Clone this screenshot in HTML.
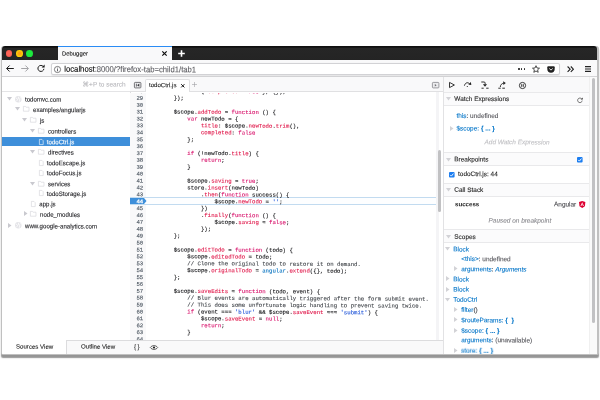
<!DOCTYPE html>
<html>
<head>
<meta charset="utf-8">
<title>Debugger</title>
<style>
html,body{margin:0;padding:0;background:#fff;}
body{width:600px;height:400px;position:relative;overflow:hidden;font-family:"Liberation Sans",sans-serif;color:#222;text-rendering:geometricPrecision;-webkit-font-smoothing:antialiased;}
*{box-sizing:border-box;}
#sc{position:absolute;left:0;top:0;width:600px;height:400px;}
#zm{position:absolute;left:0;top:0;width:600px;height:400px;}
.abs{position:absolute;}
svg{position:absolute;overflow:visible;}
#shadow{position:absolute;left:.6px;top:46px;width:598.8px;height:309.3px;border-radius:3px 3px 2px 2px;background:#c0c0c0;box-shadow:0 2.1px 1.2px rgba(0,0,0,.42);}
#win{position:absolute;left:2px;top:46px;width:595px;height:308px;background:#fff;border-radius:3px 3px 1px 1px;overflow:hidden;will-change:transform;}
#tabbar{position:absolute;left:0;top:0;width:595px;height:14px;background:linear-gradient(#0c0c0c 0,#161616 1.5px,#262626 2.5px,#242424 100%);}
#tab{position:absolute;left:55.6px;top:0;width:114.2px;height:14px;background:#f9f9fa;border-top:1px solid #2a8cf5;}
#nav{position:absolute;left:0;top:14px;width:595px;height:17px;background:#f9f9fa;border-bottom:1px solid #d4d4d6;}
#url{position:absolute;left:49px;top:3px;width:509px;height:11px;background:#fff;border:1px solid #cfcfd2;border-radius:2px;}
.t{position:absolute;left:0;top:0;white-space:nowrap;line-height:1;transform-origin:0 0;}
.dot{position:absolute;width:6.7px;height:6.7px;border-radius:50%;top:4.1px;}
.tree{font-size:6.1px;color:#38383d;}
.ln{position:absolute;left:0;top:0;transform-origin:0 0;font-family:"Liberation Mono",monospace;font-size:45.36px;line-height:55.12px;height:55.12px;color:#4c5661;white-space:pre;-webkit-text-stroke:.96px;}
.cl{position:absolute;left:0;top:0;transform-origin:0 0;font-family:"Liberation Mono",monospace;font-size:45.36px;line-height:55.12px;height:55.12px;color:#18181b;white-space:pre;-webkit-text-stroke:.96px;}
.k{color:#d8146c;} .p{color:#e01a4c;} .s{color:#1f55d9;} .c{color:#45494e;} .v{color:#0a74c0;}
.rp{font-size:6.45px;color:#38383d;}
.b{color:#0074c8;}
.hdr{position:absolute;left:0;width:147px;background:#fbfbfc;border-top:1px solid #e9e9eb;border-bottom:1px solid #e9e9eb;}
</style>
</head>
<body>
<div id="sc"><div id="zm">
<div id="shadow"></div>
<div id="win">
<div id="tabbar">
<div class="dot" style="left:3.6px;background:radial-gradient(circle,#ff6458 40%,#f0524a 100%);"></div>
<div class="dot" style="left:13.9px;background:radial-gradient(circle,#ffa412 25%,#ffdc05 75%);"></div>
<div class="dot" style="left:24.2px;background:radial-gradient(circle,#1dea3e 50%,#18d838 100%);"></div>
<div id="tab"></div>
</div>
<div class="t " style="transform:matrix(0.125,.0006,0,0.125,60,4.58);font-size:47.2px;color:#111;-webkit-text-stroke:0.8px;">Debugger</div>
<svg style="left:159.5px;top:5px" width="5" height="5" viewBox="0 0 5 5"><path d="M0.3 0.3L4.7 4.7M4.7 0.3L0.3 4.7" stroke="#111" stroke-width="1.2" fill="none"/></svg>
<svg style="left:175.5px;top:3.5px" width="7" height="7" viewBox="0 0 7 7"><path d="M3.5 0.2V6.8M0.2 3.5H6.8" stroke="#fff" stroke-width="1.6" fill="none"/></svg>
<div id="nav"></div>
<svg style="left:4px;top:18.9px" width="8" height="7" viewBox="0 0 8 7"><path d="M7.8 3.5H0.8M3.6 0.5L0.6 3.5L3.6 6.5" stroke="#1a1a1a" stroke-width="1" fill="none"/></svg>
<svg style="left:19px;top:18.9px" width="8" height="7" viewBox="0 0 8 7"><path d="M0.2 3.5H7.2M4.4 0.5L7.4 3.5L4.4 6.5" stroke="#a4a4a7" stroke-width="1" fill="none"/></svg>
<svg style="left:34.8px;top:18.4px" width="8" height="8" viewBox="0 0 8 8"><path d="M6.3 2.6A3 3 0 1 0 6.9 4.8" stroke="#1a1a1a" stroke-width="1" fill="none"/><path d="M7.6 0.4V3.4H4.6Z" fill="#1a1a1a"/></svg>
<div class="abs" style="left:48.6px;top:16.6px;width:509.4px;height:12.8px;background:#fff;border:1px solid #d2d2d5;border-radius:2px;box-shadow:0 .5px 1px rgba(0,0,0,.08);"></div>
<svg style="left:52px;top:19.5px" width="7" height="7" viewBox="0 0 7 7"><circle cx="3.5" cy="3.5" r="3.1" stroke="#3a3a3e" stroke-width=".65" fill="none"/><path d="M3.5 3.1V5.3M3.5 1.7V2.5" stroke="#3a3a3e" stroke-width=".8"/></svg>
<div class="t " style="transform:matrix(0.11438,.0006,0,0.125,62.3,18.71);font-size:67.2px;color:#000;-webkit-text-stroke:0.8px;">localhost<span style="color:#5c5c61">:8000/?firefox-tab=child1/tab1</span></div>
<div class="abs" style="left:516.3px;top:22.3px;width:1.5px;height:1.5px;border-radius:50%;background:#222"></div>
<div class="abs" style="left:518.9px;top:22.3px;width:1.5px;height:1.5px;border-radius:50%;background:#222"></div>
<div class="abs" style="left:521.5px;top:22.3px;width:1.5px;height:1.5px;border-radius:50%;background:#222"></div>
<svg style="left:530px;top:19px" width="8" height="8" viewBox="0 0 8 8"><path d="M4 0.7L5 3L7.5 3.2L5.6 4.8L6.2 7.3L4 6L1.8 7.3L2.4 4.8L0.5 3.2L3 3Z" stroke="#222" stroke-width=".8" fill="none" stroke-linejoin="round"/></svg>
<svg style="left:544.5px;top:19.6px" width="8" height="7" viewBox="0 0 8 7"><path d="M1.2 0.3H6.8Q7.7 0.3 7.7 1.2V3A3.7 3.7 0 0 1 0.3 3V1.2Q0.3 0.3 1.2 0.3Z" fill="#222"/><path d="M2.3 2.5L4 4.1L5.7 2.5" stroke="#fff" stroke-width=".9" fill="none"/></svg>
<svg style="left:564.5px;top:19.8px" width="7" height="6.4" viewBox="0 0 7 6.4"><path d="M0.6 0.5L3.2 3.2L0.6 5.9M3.8 0.5L6.4 3.2L3.8 5.9" stroke="#222" stroke-width="1.1" fill="none"/></svg>
<svg style="left:582.5px;top:20px" width="6" height="6" viewBox="0 0 6 6"><path d="M0 0.6H6M0 3H6M0 5.4H6" stroke="#222" stroke-width="1.1" fill="none"/></svg>
<div class="abs" style="left:0;top:31px;width:128.5px;height:277px;background:#fff;border-right:1px solid #dcdcde;"></div>
<div class="abs" style="left:0;top:31px;width:128px;height:15px;border-bottom:1px solid #e4e4e6;"></div>
<div class="t " style="transform:matrix(0.125,.0006,0,0.125,80.6,35.05);font-size:52.0px;color:#b9b9bd;-webkit-text-stroke:0.8px;">&#8984;+P to search</div>
<svg style="left:5.0px;top:50.9px" width="5" height="3.5" viewBox="0 0 5 3.5"><path d="M0 0H5L2.5 3.5Z" fill="#c9c9cf"/></svg>
<svg style="left:12.8px;top:49.6px" width="6.6" height="6.6" viewBox="0 0 6.6 6.6"><circle cx="3.3" cy="3.3" r="3.2" fill="#e3e3e7"/><path d="M1 1.8L2.6 3.4L1.6 5.2M3.8 0.6L3.2 2.4L5 3.4L4.2 5.8M5.8 1.6L4.6 2.2" stroke="#fff" stroke-width=".8" fill="none"/></svg>
<div class="t " style="transform:matrix(0.1175,.0006,0,0.125,23,50.15);font-size:52.0px;color:#222226;-webkit-text-stroke:0.8px;">todomvc.com</div>
<svg style="left:12.5px;top:61.4px" width="5" height="3.5" viewBox="0 0 5 3.5"><path d="M0 0H5L2.5 3.5Z" fill="#c9c9cf"/></svg>
<svg style="left:20.5px;top:60.4px" width="6.4" height="5.6" viewBox="0 0 6.4 5.6"><path d="M0.4 0.4H2.4L3 1.2H6V5.2H0.4Z" stroke="#d2d2d6" stroke-width=".6" fill="none"/></svg>
<div class="t " style="transform:matrix(0.1175,.0006,0,0.125,31,60.65);font-size:52.0px;color:#222226;-webkit-text-stroke:0.8px;">examples/angularjs</div>
<svg style="left:20.2px;top:72.1px" width="5" height="3.5" viewBox="0 0 5 3.5"><path d="M0 0H5L2.5 3.5Z" fill="#c9c9cf"/></svg>
<svg style="left:28.3px;top:71.1px" width="6.4" height="5.6" viewBox="0 0 6.4 5.6"><path d="M0.4 0.4H2.4L3 1.2H6V5.2H0.4Z" stroke="#d2d2d6" stroke-width=".6" fill="none"/></svg>
<div class="t " style="transform:matrix(0.1175,.0006,0,0.125,38,71.35);font-size:52.0px;color:#222226;-webkit-text-stroke:0.8px;">js</div>
<svg style="left:28.2px;top:82.9px" width="5" height="3.5" viewBox="0 0 5 3.5"><path d="M0 0H5L2.5 3.5Z" fill="#c9c9cf"/></svg>
<svg style="left:36px;top:81.9px" width="6.4" height="5.6" viewBox="0 0 6.4 5.6"><path d="M0.4 0.4H2.4L3 1.2H6V5.2H0.4Z" stroke="#d2d2d6" stroke-width=".6" fill="none"/></svg>
<div class="t " style="transform:matrix(0.1175,.0006,0,0.125,46,82.15);font-size:52.0px;color:#222226;-webkit-text-stroke:0.8px;">controllers</div>
<div class="abs" style="left:0;top:90.7px;width:128px;height:9.2px;background:#3e8fda;"></div>
<svg style="left:36.8px;top:92.6px" width="4.6" height="6" viewBox="0 0 4.6 6"><path d="M0.4 0.4H2.9L4.2 1.7V5.6H0.4Z" stroke="#fff" stroke-width=".6" fill="none"/></svg>
<div class="t " style="transform:matrix(0.1175,.0006,0,0.125,44.8,92.75);font-size:52.0px;color:#fff;-webkit-text-stroke:0.8px;">todoCtrl.js</div>
<svg style="left:28.2px;top:103.9px" width="5" height="3.5" viewBox="0 0 5 3.5"><path d="M0 0H5L2.5 3.5Z" fill="#c9c9cf"/></svg>
<svg style="left:36px;top:102.9px" width="6.4" height="5.6" viewBox="0 0 6.4 5.6"><path d="M0.4 0.4H2.4L3 1.2H6V5.2H0.4Z" stroke="#d2d2d6" stroke-width=".6" fill="none"/></svg>
<div class="t " style="transform:matrix(0.1175,.0006,0,0.125,46,103.15);font-size:52.0px;color:#222226;-webkit-text-stroke:0.8px;">directives</div>
<svg style="left:36.8px;top:113.6px" width="4.6" height="6" viewBox="0 0 4.6 6"><path d="M0.4 0.4H2.9L4.2 1.7V5.6H0.4Z" stroke="#d2d2d6" stroke-width=".6" fill="none"/></svg>
<div class="t " style="transform:matrix(0.1175,.0006,0,0.125,44.8,113.75);font-size:52.0px;color:#222226;-webkit-text-stroke:0.8px;">todoEscape.js</div>
<svg style="left:36.8px;top:123.6px" width="4.6" height="6" viewBox="0 0 4.6 6"><path d="M0.4 0.4H2.9L4.2 1.7V5.6H0.4Z" stroke="#d2d2d6" stroke-width=".6" fill="none"/></svg>
<div class="t " style="transform:matrix(0.1175,.0006,0,0.125,44.8,123.75);font-size:52.0px;color:#222226;-webkit-text-stroke:0.8px;">todoFocus.js</div>
<svg style="left:28.2px;top:135.5px" width="5" height="3.5" viewBox="0 0 5 3.5"><path d="M0 0H5L2.5 3.5Z" fill="#c9c9cf"/></svg>
<svg style="left:36px;top:134.5px" width="6.4" height="5.6" viewBox="0 0 6.4 5.6"><path d="M0.4 0.4H2.4L3 1.2H6V5.2H0.4Z" stroke="#d2d2d6" stroke-width=".6" fill="none"/></svg>
<div class="t " style="transform:matrix(0.1175,.0006,0,0.125,46,134.75);font-size:52.0px;color:#222226;-webkit-text-stroke:0.8px;">services</div>
<svg style="left:36.8px;top:144.4px" width="4.6" height="6" viewBox="0 0 4.6 6"><path d="M0.4 0.4H2.9L4.2 1.7V5.6H0.4Z" stroke="#d2d2d6" stroke-width=".6" fill="none"/></svg>
<div class="t " style="transform:matrix(0.1175,.0006,0,0.125,44.8,144.55);font-size:52.0px;color:#222226;-webkit-text-stroke:0.8px;">todoStorage.js</div>
<svg style="left:29.3px;top:154.7px" width="4.6" height="6" viewBox="0 0 4.6 6"><path d="M0.4 0.4H2.9L4.2 1.7V5.6H0.4Z" stroke="#d2d2d6" stroke-width=".6" fill="none"/></svg>
<div class="t " style="transform:matrix(0.1175,.0006,0,0.125,37.3,154.85);font-size:52.0px;color:#222226;-webkit-text-stroke:0.8px;">app.js</div>
<svg style="left:21.5px;top:165.1px" width="3.5" height="5" viewBox="0 0 3.5 5"><path d="M0 0V5L3.5 2.5Z" fill="#c9c9cf"/></svg>
<svg style="left:28.3px;top:165.1px" width="6.4" height="5.6" viewBox="0 0 6.4 5.6"><path d="M0.4 0.4H2.4L3 1.2H6V5.2H0.4Z" stroke="#d2d2d6" stroke-width=".6" fill="none"/></svg>
<div class="t " style="transform:matrix(0.1175,.0006,0,0.125,38,165.35);font-size:52.0px;color:#222226;-webkit-text-stroke:0.8px;">node_modules</div>
<svg style="left:6.0px;top:176.6px" width="3.5" height="5" viewBox="0 0 3.5 5"><path d="M0 0V5L3.5 2.5Z" fill="#c9c9cf"/></svg>
<svg style="left:12.8px;top:176.3px" width="6.6" height="6.6" viewBox="0 0 6.6 6.6"><circle cx="3.3" cy="3.3" r="3.2" fill="#e3e3e7"/><path d="M1 1.8L2.6 3.4L1.6 5.2M3.8 0.6L3.2 2.4L5 3.4L4.2 5.8M5.8 1.6L4.6 2.2" stroke="#fff" stroke-width=".8" fill="none"/></svg>
<div class="t " style="transform:matrix(0.1175,.0006,0,0.125,23,176.85);font-size:52.0px;color:#222226;-webkit-text-stroke:0.8px;">www.google-analytics.com</div>
<div class="abs" style="left:64px;top:294px;width:63.5px;height:14px;background:#f9f9fa;border-top:1px solid #dcdcde;border-left:1px solid #dcdcde;"></div>
<div class="t " style="transform:matrix(0.125,.0006,0,0.125,14,297.57);font-size:48.8px;color:#222;-webkit-text-stroke:0.8px;">Sources View</div>
<div class="t " style="transform:matrix(0.125,.0006,0,0.125,79,297.57);font-size:48.8px;color:#222;-webkit-text-stroke:0.8px;">Outline View</div>
<div class="abs" style="left:128px;top:31px;width:313px;height:15px;background:#f9f9fa;border-bottom:1px solid #e0e0e2;"></div>
<svg style="left:132px;top:36px" width="7.3" height="6.3" viewBox="0 0 7.3 6.3"><rect x=".4" y=".4" width="6.5" height="5.5" rx=".8" stroke="#55555a" stroke-width=".8" fill="#f0f0f2"/><path d="M2.4 1.7V4.6" stroke="#3a3a3e" stroke-width=".7"/><path d="M5.3 1.6L3.1 3.15L5.3 4.7Z" fill="#3a3a3e"/></svg>
<div class="abs" style="left:142.5px;top:32.8px;width:45.2px;height:13.4px;background:#fff;border:1px solid #e0e0e2;border-bottom:none;border-radius:2px 2px 0 0;"></div>
<div class="t " style="transform:matrix(0.125,.0006,0,0.125,147,36.07);font-size:48.8px;color:#222;-webkit-text-stroke:0.8px;">todoCtrl.js</div>
<svg style="left:179px;top:37.6px" width="3.6" height="3.6" viewBox="0 0 3.6 3.6"><path d="M0.2 0.2L3.4 3.4M3.4 0.2L0.2 3.4" stroke="#111" stroke-width="1" fill="none"/></svg>
<svg style="left:190px;top:36.2px" width="5" height="5" viewBox="0 0 5 5"><path d="M2.5 0V5M0 2.5H5" stroke="#a0a0a4" stroke-width=".6" fill="none"/></svg>
<svg style="left:430.3px;top:36px" width="7.3" height="6.3" viewBox="0 0 7.3 6.3"><rect x=".4" y=".4" width="6.5" height="5.5" rx=".8" stroke="#85858a" stroke-width=".8" fill="#ececee"/><path d="M2.8 1.9L4.6 3.15L2.8 4.4Z" fill="#6a6a6e"/></svg>
<div class="abs" style="left:128px;top:46.5px;width:313px;height:247.5px;overflow:hidden;">
<div class="abs" style="left:0;top:0;width:16.3px;height:247.5px;background:#f9f9fa;"></div>
<div class="abs" style="left:0;top:104.4px;width:306.3px;height:8px;background:#fdfeff;border-top:.8px solid #c2dbf0;border-bottom:.8px solid #c2dbf0;"></div>
<svg style="left:0;top:105.7px" width="16.5" height="6" viewBox="0 0 16.5 6"><path d="M0 0H14L16.5 3L14 6H0Z" fill="#3e8fda"/></svg>
<div class="ln" style="transform:matrix(.125,.0006,0,.125,6.39,-4.97);color:#4c5661;">28</div>
<div class="cl" style="transform:matrix(.125,.0006,0,.125,70.94,-4.97)">{ <span class="p">completed</span>: <span class="k">true</span> }, {});</div>
<div class="ln" style="transform:matrix(.125,.0006,0,.125,6.39,1.92);color:#4c5661;">29</div>
<div class="cl" style="transform:matrix(.125,.0006,0,.125,43.72,1.92)">});</div>
<div class="ln" style="transform:matrix(.125,.0006,0,.125,6.39,8.81);color:#4c5661;">30</div>
<div class="ln" style="transform:matrix(.125,.0006,0,.125,6.39,15.7);color:#4c5661;">31</div>
<div class="cl" style="transform:matrix(.125,.0006,0,.125,43.72,15.7)">$scope.<span class="p">addTodo</span> = <span class="k">function</span> () {</div>
<div class="ln" style="transform:matrix(.125,.0006,0,.125,6.39,22.59);color:#4c5661;">32</div>
<div class="cl" style="transform:matrix(.125,.0006,0,.125,57.33,22.59)"><span class="k">var</span> newTodo = {</div>
<div class="ln" style="transform:matrix(.125,.0006,0,.125,6.39,29.48);color:#4c5661;">33</div>
<div class="cl" style="transform:matrix(.125,.0006,0,.125,70.94,29.48)"><span class="p">title</span>: $scope.<span class="p">newTodo</span>.<span class="p">trim</span>(),</div>
<div class="ln" style="transform:matrix(.125,.0006,0,.125,6.39,36.37);color:#4c5661;">34</div>
<div class="cl" style="transform:matrix(.125,.0006,0,.125,70.94,36.37)"><span class="p">completed</span>: <span class="k">false</span></div>
<div class="ln" style="transform:matrix(.125,.0006,0,.125,6.39,43.26);color:#4c5661;">35</div>
<div class="cl" style="transform:matrix(.125,.0006,0,.125,57.33,43.26)">};</div>
<div class="ln" style="transform:matrix(.125,.0006,0,.125,6.39,50.15);color:#4c5661;">36</div>
<div class="ln" style="transform:matrix(.125,.0006,0,.125,6.39,57.04);color:#4c5661;">37</div>
<div class="cl" style="transform:matrix(.125,.0006,0,.125,57.33,57.04)"><span class="k">if</span> (!newTodo.<span class="p">title</span>) {</div>
<div class="ln" style="transform:matrix(.125,.0006,0,.125,6.39,63.93);color:#4c5661;">38</div>
<div class="cl" style="transform:matrix(.125,.0006,0,.125,70.94,63.93)"><span class="k">return</span>;</div>
<div class="ln" style="transform:matrix(.125,.0006,0,.125,6.39,70.82);color:#4c5661;">39</div>
<div class="cl" style="transform:matrix(.125,.0006,0,.125,57.33,70.82)">}</div>
<div class="ln" style="transform:matrix(.125,.0006,0,.125,6.39,77.71);color:#4c5661;">40</div>
<div class="ln" style="transform:matrix(.125,.0006,0,.125,6.39,84.6);color:#4c5661;">41</div>
<div class="cl" style="transform:matrix(.125,.0006,0,.125,57.33,84.6)">$scope.<span class="p">saving</span> = <span class="k">true</span>;</div>
<div class="ln" style="transform:matrix(.125,.0006,0,.125,6.39,91.49);color:#4c5661;">42</div>
<div class="cl" style="transform:matrix(.125,.0006,0,.125,57.33,91.49)">store.<span class="p">insert</span>(newTodo)</div>
<div class="ln" style="transform:matrix(.125,.0006,0,.125,6.39,98.38);color:#4c5661;">43</div>
<div class="cl" style="transform:matrix(.125,.0006,0,.125,70.94,98.38)">.<span class="p">then</span>(<span class="k">function</span> success() {</div>
<div class="ln" style="transform:matrix(.125,.0006,0,.125,6.39,105.27);color:#fff;font-weight:bold;">44</div>
<div class="cl" style="transform:matrix(.125,.0006,0,.125,84.55,105.27)">$scope.<span class="p">newTodo</span> = <span class="s">''</span>;</div>
<div class="ln" style="transform:matrix(.125,.0006,0,.125,6.39,112.16);color:#4c5661;">45</div>
<div class="cl" style="transform:matrix(.125,.0006,0,.125,70.94,112.16)">})</div>
<div class="ln" style="transform:matrix(.125,.0006,0,.125,6.39,119.05);color:#4c5661;">46</div>
<div class="cl" style="transform:matrix(.125,.0006,0,.125,70.94,119.05)">.<span class="p">finally</span>(<span class="k">function</span> () {</div>
<div class="ln" style="transform:matrix(.125,.0006,0,.125,6.39,125.94);color:#4c5661;">47</div>
<div class="cl" style="transform:matrix(.125,.0006,0,.125,84.55,125.94)">$scope.<span class="p">saving</span> = <span class="k">false</span>;</div>
<div class="ln" style="transform:matrix(.125,.0006,0,.125,6.39,132.83);color:#4c5661;">48</div>
<div class="cl" style="transform:matrix(.125,.0006,0,.125,70.94,132.83)">});</div>
<div class="ln" style="transform:matrix(.125,.0006,0,.125,6.39,139.72);color:#4c5661;">49</div>
<div class="cl" style="transform:matrix(.125,.0006,0,.125,43.72,139.72)">};</div>
<div class="ln" style="transform:matrix(.125,.0006,0,.125,6.39,146.61);color:#4c5661;">50</div>
<div class="ln" style="transform:matrix(.125,.0006,0,.125,6.39,153.5);color:#4c5661;">51</div>
<div class="cl" style="transform:matrix(.125,.0006,0,.125,43.72,153.5)">$scope.<span class="p">editTodo</span> = <span class="k">function</span> (todo) {</div>
<div class="ln" style="transform:matrix(.125,.0006,0,.125,6.39,160.39);color:#4c5661;">52</div>
<div class="cl" style="transform:matrix(.125,.0006,0,.125,57.33,160.39)">$scope.<span class="p">editedTodo</span> = todo;</div>
<div class="ln" style="transform:matrix(.125,.0006,0,.125,6.39,167.28);color:#4c5661;">53</div>
<div class="cl" style="transform:matrix(.125,.0006,0,.125,57.33,167.28)"><span class="c">// Clone the original todo to restore it on demand.</span></div>
<div class="ln" style="transform:matrix(.125,.0006,0,.125,6.39,174.17);color:#4c5661;">54</div>
<div class="cl" style="transform:matrix(.125,.0006,0,.125,57.33,174.17)">$scope.<span class="p">originalTodo</span> = <span class="v">angular</span>.<span class="p">extend</span>({}, todo);</div>
<div class="ln" style="transform:matrix(.125,.0006,0,.125,6.39,181.06);color:#4c5661;">55</div>
<div class="cl" style="transform:matrix(.125,.0006,0,.125,43.72,181.06)">};</div>
<div class="ln" style="transform:matrix(.125,.0006,0,.125,6.39,187.95);color:#4c5661;">56</div>
<div class="ln" style="transform:matrix(.125,.0006,0,.125,6.39,194.84);color:#4c5661;">57</div>
<div class="cl" style="transform:matrix(.125,.0006,0,.125,43.72,194.84)">$scope.<span class="p">saveEdits</span> = <span class="k">function</span> (todo, event) {</div>
<div class="ln" style="transform:matrix(.125,.0006,0,.125,6.39,201.73);color:#4c5661;">58</div>
<div class="cl" style="transform:matrix(.125,.0006,0,.125,57.33,201.73)"><span class="c">// Blur events are automatically triggered after the form submit event.</span></div>
<div class="ln" style="transform:matrix(.125,.0006,0,.125,6.39,208.62);color:#4c5661;">59</div>
<div class="cl" style="transform:matrix(.125,.0006,0,.125,57.33,208.62)"><span class="c">// This does some unfortunate logic handling to prevent saving twice.</span></div>
<div class="ln" style="transform:matrix(.125,.0006,0,.125,6.39,215.51);color:#4c5661;">60</div>
<div class="cl" style="transform:matrix(.125,.0006,0,.125,57.33,215.51)"><span class="k">if</span> (event === <span class="s">'blur'</span> &amp;&amp; $scope.<span class="p">saveEvent</span> === <span class="s">'submit'</span>) {</div>
<div class="ln" style="transform:matrix(.125,.0006,0,.125,6.39,222.4);color:#4c5661;">61</div>
<div class="cl" style="transform:matrix(.125,.0006,0,.125,70.94,222.4)">$scope.<span class="p">saveEvent</span> = <span class="k">null</span>;</div>
<div class="ln" style="transform:matrix(.125,.0006,0,.125,6.39,229.29);color:#4c5661;">62</div>
<div class="cl" style="transform:matrix(.125,.0006,0,.125,70.94,229.29)"><span class="k">return</span>;</div>
<div class="ln" style="transform:matrix(.125,.0006,0,.125,6.39,236.18);color:#4c5661;">63</div>
<div class="cl" style="transform:matrix(.125,.0006,0,.125,57.33,236.18)">}</div>
<div class="ln" style="transform:matrix(.125,.0006,0,.125,6.39,243.07);color:#4c5661;">64</div>
</div>
<div class="abs" style="left:433.6px;top:46px;width:3px;height:248px;background:#f4f4f6;"></div>
<div class="abs" style="left:435.5px;top:104px;width:3px;height:62px;border-radius:1.5px;background:#c1c1c3;"></div>
<div class="abs" style="left:128px;top:294px;width:313px;height:14px;background:#f9f9fa;border-top:1px solid #dcdcde;"></div>
<div class="t " style="transform:matrix(0.125,.0006,0,0.125,132,297.7);font-size:51.2px;color:#333;-webkit-text-stroke:0.8px;">{&thinsp;}</div>
<svg style="left:148px;top:299px" width="8" height="5" viewBox="0 0 8 5"><path d="M0.3 2.5C2 0 6 0 7.7 2.5C6 5 2 5 0.3 2.5Z" stroke="#222" stroke-width=".7" fill="none"/><circle cx="4" cy="2.5" r="1.1" fill="#222"/></svg>
<div class="abs" style="left:440.9px;top:31px;width:154.10000000000002px;height:277px;background:#fff;border-left:1px solid #e2e2e4;"></div>
<div class="abs" style="left:441.9px;top:31px;width:147px;height:15px;background:#f9f9fa;"></div>
<svg style="left:446.6px;top:36px" width="6" height="6" viewBox="0 0 6 6"><path d="M0.5 0.4L5.4 3L0.5 5.6Z" stroke="#222" stroke-width=".9" fill="none" stroke-linejoin="round"/></svg>
<svg style="left:462px;top:35px" width="8" height="7" viewBox="0 0 8 7"><path d="M0.5 4.3C1.3 1.1 4.6 0.9 5.7 3.1" stroke="#222" stroke-width=".95" fill="none" stroke-linecap="round"/><path d="M6.9 0.9L7.3 4.1L4.3 3.4Z" fill="#222"/><circle cx="3.3" cy="5.5" r=".6" fill="#222"/></svg>
<svg style="left:479px;top:35px" width="8" height="8" viewBox="0 0 8 8"><path d="M0.3 1H2.9C4.6 1 4.2 2.5 4 3.6" stroke="#222" stroke-width=".95" fill="none"/><path d="M1.9 3.3H6.1L4 5.7Z" fill="#222"/><path d="M0.5 7.2H2.7M5.2 7.2H7.6" stroke="#222" stroke-width=".95"/></svg>
<svg style="left:496px;top:35px" width="8" height="8" viewBox="0 0 8 8"><path d="M2.3 6C2.4 3.7 3.8 2.6 5.6 2.2" stroke="#222" stroke-width=".95" fill="none"/><path d="M5.1 0.3L7.8 2.1L5.4 4Z" fill="#222"/><path d="M0.3 7.2H2.7M4.3 7.2H6.9" stroke="#222" stroke-width=".95"/></svg>
<svg style="left:516.5px;top:35.5px" width="7" height="7" viewBox="0 0 7 7"><circle cx="3.5" cy="3.5" r="3.1" stroke="#222" stroke-width=".9" fill="none"/><path d="M2.7 2.2V4.8M4.3 2.2V4.8" stroke="#222" stroke-width=".9"/></svg>
<div class="hdr" style="left:441.9px;top:46px;height:13.5px;"></div>
<svg style="left:443.8px;top:51.1px" width="5" height="3.5" viewBox="0 0 5 3.5"><path d="M0 0H5L2.5 3.5Z" fill="#d2d2d6"/></svg>
<div class="t " style="transform:matrix(0.125,.0006,0,0.125,452.3,49.48);font-size:51.6px;color:#222;-webkit-text-stroke:0.8px;">Watch Expressions</div>
<svg style="left:575px;top:50.5px" width="6" height="6" viewBox="0 0 6 6"><path d="M4.8 2A2.3 2.3 0 1 0 5.2 3.6" stroke="#444" stroke-width=".7" fill="none"/><path d="M5.8 0.4V2.6H3.6Z" fill="#444"/></svg>
<div class="t " style="transform:matrix(0.125,.0006,0,0.125,454.5,66.48);font-size:51.6px;color:#38383d;-webkit-text-stroke:0.8px;"><span class="b">this</span>: <span style="color:#55555a">undefined</span></div>
<svg style="left:447.5px;top:79.5px" width="3.5" height="5" viewBox="0 0 3.5 5"><path d="M0 0V5L3.5 2.5Z" fill="#d2d2d6"/></svg>
<div class="t " style="transform:matrix(0.125,.0006,0,0.125,454.5,79.08);font-size:51.6px;color:#222;-webkit-text-stroke:0.8px;"><span class="b">$scope: <b>{ ... }</b></span></div>
<div class="t " style="transform:matrix(0.125,.0006,0,0.125,482.5,92.78);font-size:51.6px;color:#c0c0c4;-webkit-text-stroke:0.8px;"><i>Add Watch Expression</i></div>
<div class="hdr" style="left:441.9px;top:106px;height:14px;"></div>
<svg style="left:443.8px;top:111.6px" width="5" height="3.5" viewBox="0 0 5 3.5"><path d="M0 0H5L2.5 3.5Z" fill="#d2d2d6"/></svg>
<div class="t " style="transform:matrix(0.125,.0006,0,0.125,452.3,109.98);font-size:51.6px;color:#222;-webkit-text-stroke:0.8px;">Breakpoints</div>
<svg style="left:574.7px;top:110.7px" width="5.6" height="5.6" viewBox="0 0 5.6 5.6"><rect x="0" y="0" width="5.6" height="5.6" rx="1" fill="#1b7df0"/><path d="M1.2 2.9L2.4 4.1L4.4 1.6" stroke="#fff" stroke-width=".9" fill="none"/></svg>
<svg style="left:447.2px;top:125.8px" width="5.6" height="5.6" viewBox="0 0 5.6 5.6"><rect x="0" y="0" width="5.6" height="5.6" rx="1" fill="#1b7df0"/><path d="M1.2 2.9L2.4 4.1L4.4 1.6" stroke="#fff" stroke-width=".9" fill="none"/></svg>
<div class="t " style="transform:matrix(0.125,.0006,0,0.125,456,124.68);font-size:51.6px;color:#222;-webkit-text-stroke:0.8px;">todoCtrl.js: 44</div>
<div class="hdr" style="left:441.9px;top:137px;height:14px;"></div>
<svg style="left:443.8px;top:142.1px" width="5" height="3.5" viewBox="0 0 5 3.5"><path d="M0 0H5L2.5 3.5Z" fill="#d2d2d6"/></svg>
<div class="t " style="transform:matrix(0.125,.0006,0,0.125,452.3,140.48);font-size:51.6px;color:#222;-webkit-text-stroke:0.8px;">Call Stack</div>
<div class="t " style="transform:matrix(0.125,.0006,0,0.125,453,155.14);font-size:49.2px;color:#222;font-weight:bold;"><b>success</b></div>
<div class="t " style="transform:matrix(0.125,.0006,0,0.125,552,154.98);font-size:51.6px;color:#4a4a4f;-webkit-text-stroke:0.8px;">Angular</div>
<svg style="left:577px;top:155px" width="6.4" height="7" viewBox="0 0 6.4 7"><path d="M3.2 0L6.4 1.1L5.9 5.3L3.2 7L0.5 5.3L0 1.1Z" fill="#dd0031"/><path d="M3.2 1.3L1.5 5.1H2.2L2.55 4.2H3.85L4.2 5.1H4.9ZM3.2 2.6L3.65 3.7H2.75Z" fill="#fff"/></svg>
<div class="t " style="transform:matrix(0.125,.0006,0,0.125,486.5,171.18);font-size:51.6px;color:#8a8a8f;-webkit-text-stroke:0.8px;"><i>Paused on breakpoint</i></div>
<div class="hdr" style="left:441.9px;top:183.1px;height:14.4px;"></div>
<svg style="left:443.8px;top:189.1px" width="5" height="3.5" viewBox="0 0 5 3.5"><path d="M0 0H5L2.5 3.5Z" fill="#d2d2d6"/></svg>
<div class="t " style="transform:matrix(0.125,.0006,0,0.125,452.3,187.48);font-size:51.6px;color:#222;-webkit-text-stroke:0.8px;">Scopes</div>
<svg style="left:443.0px;top:201.4px" width="5" height="3.5" viewBox="0 0 5 3.5"><path d="M0 0H5L2.5 3.5Z" fill="#d2d2d6"/></svg>
<div class="t " style="transform:matrix(0.125,.0006,0,0.125,451.2,199.98);font-size:51.6px;color:#38383d;-webkit-text-stroke:0.8px;"><span class="b">Block</span></div>
<div class="t " style="transform:matrix(0.125,.0006,0,0.125,459.2,209.68);font-size:51.6px;color:#38383d;-webkit-text-stroke:0.8px;"><span class="b">&lt;this&gt;</span>: <span style="color:#55555a">undefined</span></div>
<svg style="left:451.8px;top:220.3px" width="3.5" height="5" viewBox="0 0 3.5 5"><path d="M0 0V5L3.5 2.5Z" fill="#d2d2d6"/></svg>
<div class="t " style="transform:matrix(0.125,.0006,0,0.125,459.2,219.88);font-size:51.6px;color:#38383d;-webkit-text-stroke:0.8px;"><span class="b">arguments</span>: <i class="b">Arguments</i></div>
<svg style="left:444.0px;top:230.4px" width="3.5" height="5" viewBox="0 0 3.5 5"><path d="M0 0V5L3.5 2.5Z" fill="#d2d2d6"/></svg>
<div class="t " style="transform:matrix(0.125,.0006,0,0.125,451.2,229.98);font-size:51.6px;color:#38383d;-webkit-text-stroke:0.8px;"><span class="b">Block</span></div>
<svg style="left:444.0px;top:240.5px" width="3.5" height="5" viewBox="0 0 3.5 5"><path d="M0 0V5L3.5 2.5Z" fill="#d2d2d6"/></svg>
<div class="t " style="transform:matrix(0.125,.0006,0,0.125,451.2,240.08);font-size:51.6px;color:#38383d;-webkit-text-stroke:0.8px;"><span class="b">Block</span></div>
<svg style="left:443.0px;top:251.7px" width="5" height="3.5" viewBox="0 0 5 3.5"><path d="M0 0H5L2.5 3.5Z" fill="#d2d2d6"/></svg>
<div class="t " style="transform:matrix(0.125,.0006,0,0.125,451.2,250.28);font-size:51.6px;color:#38383d;-webkit-text-stroke:0.8px;"><span class="b">TodoCtrl</span></div>
<svg style="left:451.8px;top:260.9px" width="3.5" height="5" viewBox="0 0 3.5 5"><path d="M0 0V5L3.5 2.5Z" fill="#d2d2d6"/></svg>
<div class="t " style="transform:matrix(0.125,.0006,0,0.125,459.2,260.48);font-size:51.6px;color:#38383d;-webkit-text-stroke:0.8px;"><span class="b">filter</span>()</div>
<svg style="left:451.8px;top:271.3px" width="3.5" height="5" viewBox="0 0 3.5 5"><path d="M0 0V5L3.5 2.5Z" fill="#d2d2d6"/></svg>
<div class="t " style="transform:matrix(0.125,.0006,0,0.125,459.2,270.88);font-size:51.6px;color:#38383d;-webkit-text-stroke:0.8px;"><span class="b">$routeParams: <b>{ &nbsp;}</b></span></div>
<svg style="left:451.8px;top:281.8px" width="3.5" height="5" viewBox="0 0 3.5 5"><path d="M0 0V5L3.5 2.5Z" fill="#d2d2d6"/></svg>
<div class="t " style="transform:matrix(0.125,.0006,0,0.125,459.2,281.38);font-size:51.6px;color:#38383d;-webkit-text-stroke:0.8px;"><span class="b">$scope: <b>{ ... }</b></span></div>
<div class="t " style="transform:matrix(0.125,.0006,0,0.125,459.2,290.78);font-size:51.6px;color:#38383d;-webkit-text-stroke:0.8px;"><span class="b">arguments</span>: <span style="color:#55555a">(unavailable)</span></div>
<svg style="left:451.8px;top:301.6px" width="3.5" height="5" viewBox="0 0 3.5 5"><path d="M0 0V5L3.5 2.5Z" fill="#d2d2d6"/></svg>
<div class="t " style="transform:matrix(0.125,.0006,0,0.125,459.2,301.18);font-size:51.6px;color:#38383d;-webkit-text-stroke:0.8px;"><span class="b">store: <b>{ ... }</b></span></div>
<div class="abs" style="left:587px;top:31px;width:8px;height:277px;background:#fafafa;border-left:1px solid #f0f0f0;"></div>
<div class="abs" style="left:589.7px;top:32px;width:3px;height:245px;border-radius:1.5px;background:#c1c1c3;"></div>
</div>
</div></div>
</body>
</html>
